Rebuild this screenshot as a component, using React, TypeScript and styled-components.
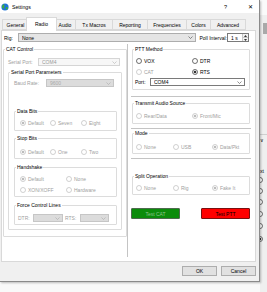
import React from 'react';
import styled, { createGlobalStyle } from 'styled-components';

const GlobalStyle = createGlobalStyle`
  html, body {
    margin: 0;
    padding: 0;
  }
  body {
    background: #f9f9f9;
    font-family: 'Liberation Sans', Arial, sans-serif;
    font-size: 5px;
    line-height: 6px;
    color: #000;
  }
  * {
    box-sizing: border-box;
  }
`;

const Screen = styled.div`
  display: flex;
  align-items: flex-start;
  width: 267px;
  height: 292px;
  overflow: hidden;
`;

const Dialog = styled.div`
  flex: 0 0 260px;
  height: 282px;
  display: flex;
  flex-direction: column;
  background: #f0f0f0;
  border-right: 1px solid #8a8a8a;
  border-bottom: 1px solid #8a8a8a;
  box-shadow: 1px 1px 2px rgba(0, 0, 0, 0.25);
  position: relative;
  z-index: 1;
`;

const TitleBar = styled.div`
  height: 13px;
  flex-shrink: 0;
  display: flex;
  align-items: center;
  gap: 3px;
  padding: 0 6px 0 1px;
  background: #fff;
`;

const TitleText = styled.span`
  flex: 1;
  font-size: 5.2px;
`;

const TitleButton = styled.span<{ $gap?: number }>`
  font-size: ${(p) => (p.$gap ? 5.5 : 6)}px;
  margin-right: ${(p) => p.$gap ?? 0}px;
`;

const TabStrip = styled.div`
  height: 17px;
  flex-shrink: 0;
  display: flex;
  align-items: flex-end;
  padding-left: 2px;
`;

const Tab = styled.div<{ $w: number; $active?: boolean }>`
  width: ${(p) => p.$w + (p.$active ? 4 : 0)}px;
  height: ${(p) => (p.$active ? 14 : 11)}px;
  margin: 0 ${(p) => (p.$active ? -3 : -1)}px ${(p) => (p.$active ? -1 : 0)}px
    ${(p) => (p.$active ? -2 : 0)}px;
  display: flex;
  align-items: center;
  justify-content: center;
  padding-bottom: ${(p) => (p.$active ? 2 : 0)}px;
  background: ${(p) => (p.$active ? '#fff' : '#f0f0f0')};
  border: 1px solid #d9d9d9;
  border-bottom: ${(p) => (p.$active ? 'none' : '1px solid #d9d9d9')};
  position: relative;
  z-index: ${(p) => (p.$active ? 2 : 0)};
`;

const Panel = styled.div`
  margin: 0 3px 0 1px;
  height: 232px;
  flex-shrink: 0;
  display: flex;
  flex-direction: column;
  padding: 2px 3px 0 1px;
  background: #fff;
  border: 1px solid #d9d9d9;
`;

const RigRow = styled.div`
  height: 9px;
  display: flex;
  align-items: center;
  padding-right: 3px;
`;

const Label = styled.span<{ $w?: number; $disabled?: boolean; $ml?: number }>`
  flex: 0 0 ${(p) => (p.$w ? `${p.$w}px` : 'auto')};
  margin-left: ${(p) => p.$ml ?? 0}px;
  color: ${(p) => (p.$disabled ? '#a0a0a0' : '#000')};
  white-space: nowrap;
`;

type ComboKind = 'button' | 'edit' | 'disabled' | 'disabledGray';

const comboColors: Record<ComboKind, { bg: string; border: string; text: string; arrow: string }> = {
  button: { bg: '#e5e5e5', border: '#adadad', text: '#000', arrow: '#444' },
  edit: { bg: '#fff', border: '#7a7a7a', text: '#000', arrow: '#444' },
  disabled: { bg: '#f7f7f7', border: '#d5d5d5', text: '#9a9a9a', arrow: '#b0b0b0' },
  disabledGray: { bg: '#dcdcdc', border: '#c6c6c6', text: '#a9a9a9', arrow: '#a9a9a9' },
};

const ComboBox = styled.div<{ $kind: ComboKind; $w?: number; $h?: number }>`
  flex: ${(p) => (p.$w ? `0 0 ${p.$w}px` : '1')};
  height: ${(p) => p.$h ?? 8}px;
  display: flex;
  align-items: center;
  padding: 0 2px 0 3px;
  background: ${(p) => comboColors[p.$kind].bg};
  border: 1px solid ${(p) => comboColors[p.$kind].border};
  color: ${(p) => comboColors[p.$kind].text};
`;

const ComboText = styled.span`
  flex: 1;
  white-space: nowrap;
  overflow: hidden;
`;

function Combo({ kind, text, w, h }: { kind: ComboKind; text?: string; w?: number; h?: number }) {
  return (
    <ComboBox $kind={kind} $w={w} $h={h}>
      <ComboText>{text}</ComboText>
      <svg width="5" height="3" viewBox="0 0 5 3">
        <polyline points="0.5,0.5 2.5,2.5 4.5,0.5" fill="none" stroke={comboColors[kind].arrow} strokeWidth="0.6" />
      </svg>
    </ComboBox>
  );
}

const SpinBox = styled.div`
  flex: 0 0 22px;
  height: 9px;
  display: flex;
  align-items: stretch;
  background: #fff;
  border: 1px solid #7a7a7a;
`;

const SpinValue = styled.span`
  flex: 1;
  display: flex;
  align-items: center;
  padding-left: 3px;
`;

const SpinArrows = styled.div`
  flex: 0 0 6px;
  display: flex;
  flex-direction: column;
  border-left: 1px solid #c8c8c8;
  background: #f2f2f2;
`;

const SpinArrow = styled.div<{ $up?: boolean }>`
  flex: 1;
  display: flex;
  align-items: center;
  justify-content: center;
  border-bottom: ${(p) => (p.$up ? '1px solid #c8c8c8' : 'none')};
`;

const Columns = styled.div`
  height: 213px;
  margin-top: 2px;
  display: flex;
`;

const LeftCol = styled.div`
  flex: 0 0 124px;
  padding-top: 2px;
  display: flex;
  flex-direction: column;
`;

const VLine = styled.div`
  flex: 0 0 1px;
  background: #c4c4c4;
`;

const RightCol = styled.div`
  flex: 0 0 120px;
  margin-left: 3px;
  padding-top: 2px;
  display: flex;
  flex-direction: column;
`;

const Fieldset = styled.fieldset<{ $pad: string; $mt?: number; $mx?: number }>`
  margin: ${(p) => p.$mt ?? 0}px ${(p) => p.$mx ?? 0}px 0;
  min-width: 0;
  padding: ${(p) => p.$pad};
  display: flex;
  flex-direction: column;
  border: 1px solid #dcdcdc;
  border-radius: 1px;
`;

const Legend = styled.legend<{ $ml: number }>`
  height: 6px;
  padding: 0 1px;
  margin-left: ${(p) => p.$ml}px;
  line-height: 6px;
  white-space: nowrap;
`;

function GroupBox({
  title,
  pt = 0,
  pr = 4,
  pb = 2,
  pl = 4,
  mt,
  mx,
  children,
}: {
  title: string;
  pt?: number;
  pr?: number;
  pb?: number;
  pl?: number;
  mt?: number;
  mx?: number;
  children: React.ReactNode;
}) {
  return (
    <Fieldset $pad={`${pt}px ${pr}px ${pb}px ${pl}px`} $mt={mt} $mx={mx}>
      <Legend $ml={1 - pl}>{title}</Legend>
      {children}
    </Fieldset>
  );
}

const FormRow = styled.div<{ $mt: number; $ml?: number; $mr?: number }>`
  height: 8px;
  margin: ${(p) => p.$mt}px ${(p) => p.$mr ?? 0}px 0 ${(p) => p.$ml ?? 0}px;
  display: flex;
  align-items: center;
`;

const RadioGrid = styled.div<{ $cols: string; $mt: number }>`
  height: 8px;
  margin-top: ${(p) => p.$mt}px;
  display: grid;
  grid-template-columns: ${(p) => p.$cols};
  align-items: center;
`;

const RadioLabel = styled.span<{ $disabled?: boolean }>`
  display: inline-flex;
  align-items: center;
  gap: 2px;
  white-space: nowrap;
  color: ${(p) => (p.$disabled ? '#a0a0a0' : '#000')};
`;

function Radio({ label, checked, disabled }: { label: string; checked?: boolean; disabled?: boolean }) {
  const c = disabled ? '#bcbcbc' : '#333';
  return (
    <RadioLabel $disabled={disabled}>
      <svg width="6" height="6" viewBox="0 0 6 6">
        <circle cx="3" cy="3" r="2.5" fill="#fff" stroke={c} strokeWidth="0.7" />
        {checked && <circle cx="3" cy="3" r="1.3" fill={c} />}
      </svg>
      {label}
    </RadioLabel>
  );
}

const HLine = styled.div<{ $mt: number }>`
  height: 1px;
  flex-shrink: 0;
  margin-top: ${(p) => p.$mt}px;
  background: #c4c4c4;
`;

const TestRow = styled.div`
  margin-top: 13px;
  display: flex;
  justify-content: space-between;
  padding-right: 1px;
`;

const TestButton = styled.div<{ $bg: string; $border: string; $color: string }>`
  width: 49px;
  height: 11px;
  display: flex;
  align-items: center;
  justify-content: center;
  background: ${(p) => p.$bg};
  border: 1px solid ${(p) => p.$border};
  border-radius: 1px;
  color: ${(p) => p.$color};
`;

const Footer = styled.div`
  margin-top: 4px;
  display: flex;
  justify-content: flex-end;
  gap: 4px;
  padding-right: 3px;
`;

const PushButton = styled.div`
  width: 35px;
  height: 10px;
  display: flex;
  align-items: center;
  justify-content: center;
  background: #e1e1e1;
  border: 1px solid #adadad;
`;

const BackWindow = styled.div`
  flex: 1;
  height: 292px;
  display: flex;
  flex-direction: column;
  background: #efefef;
  overflow: hidden;
`;

const BackTop = styled.div`
  height: 15px;
  background: #fafafa;
  flex-shrink: 0;
`;

const BackThumb = styled.div`
  height: 11px;
  width: 4px;
  margin: 8px 0 0 3px;
  background: #a9a9a9;
  flex-shrink: 0;
`;

const BackRule = styled.div<{ $mt: number }>`
  height: 1px;
  margin-top: ${(p) => p.$mt}px;
  background: #cfcfcf;
  flex-shrink: 0;
`;

const BackText = styled.span<{ $mt: number }>`
  margin: ${(p) => p.$mt}px 0 0 0;
  height: 6px;
  flex-shrink: 0;
  white-space: nowrap;
`;

const BackRadio = styled.div<{ $mt: number }>`
  height: 6px;
  margin: ${(p) => p.$mt}px 0 0 -3px;
  flex-shrink: 0;
  display: flex;
`;

function GlobeIcon() {
  return (
    <svg width="8" height="8" viewBox="0 0 8 8">
      <circle cx="4" cy="4" r="3.6" fill="#1f74d6" />
      <path d="M2 1.6 C3 1.2 4 2 3.4 3 C2.8 3.8 3.6 4.6 2.8 5.6 C2 5.4 1 4.4 1 3.4 Z" fill="#3fae3a" />
      <path d="M5 4 C6 3.6 7.2 4.2 6.8 5.4 C6.2 6.6 5.2 6.8 4.8 6 Z" fill="#3fae3a" />
    </svg>
  );
}

const tabs: { label: string; w: number; active?: boolean }[] = [
  { label: 'General', w: 27 },
  { label: 'Radio', w: 27, active: true },
  { label: 'Audio', w: 22 },
  { label: 'Tx Macros', w: 38 },
  { label: 'Reporting', w: 36 },
  { label: 'Frequencies', w: 40 },
  { label: 'Colors', w: 25 },
  { label: 'Advanced', w: 36 },
];

export default function App() {
  return (
    <>
      <GlobalStyle />
      <Screen>
        <Dialog>
          <TitleBar>
            <GlobeIcon />
            <TitleText>Settings</TitleText>
            <TitleButton $gap={18}>?</TitleButton>
            <TitleButton>✕</TitleButton>
          </TitleBar>

          <TabStrip>
            {tabs.map((t) => (
              <Tab key={t.label} $w={t.w} $active={t.active}>
                {t.label}
              </Tab>
            ))}
          </TabStrip>

          <Panel>
            <RigRow>
              <Label $w={14} $ml={1}>Rig:</Label>
              <Combo kind="button" text="None" h={9} />
              <Label $ml={3}>Poll Interval:</Label>
              <SpinBox>
                <SpinValue>1 s</SpinValue>
                <SpinArrows>
                  <SpinArrow $up>
                    <svg width="3" height="2" viewBox="0 0 3 2">
                      <polygon points="0,2 1.5,0 3,2" fill="#333" />
                    </svg>
                  </SpinArrow>
                  <SpinArrow>
                    <svg width="3" height="2" viewBox="0 0 3 2">
                      <polygon points="0,0 1.5,2 3,0" fill="#333" />
                    </svg>
                  </SpinArrow>
                </SpinArrows>
              </SpinBox>
            </RigRow>

            <Columns>
              <LeftCol>
                <GroupBox title="CAT Control" pl={4} pr={4} pb={6} mx={0}>
                  <FormRow $mt={6} $mr={2}>
                    <Label $w={30} $disabled>Serial Port:</Label>
                    <Combo kind="disabled" text="COM4" />
                  </FormRow>
                  <GroupBox title="Serial Port Parameters" pl={5} pr={4} pb={4} mt={3}>
                    <FormRow $mt={4}>
                      <Label $w={32} $disabled>Baud Rate:</Label>
                      <Combo kind="disabledGray" text="9600" w={68} />
                    </FormRow>

                    <GroupBox title="Data Bits" pl={5} pb={3} mt={21}>
                      <RadioGrid $cols="30px 31px auto" $mt={5}>
                        <Radio label="Default" checked disabled />
                        <Radio label="Seven" disabled />
                        <Radio label="Eight" disabled />
                      </RadioGrid>
                    </GroupBox>

                    <GroupBox title="Stop Bits" pl={5} pb={2} mt={4}>
                      <RadioGrid $cols="30px 31px auto" $mt={7}>
                        <Radio label="Default" checked disabled />
                        <Radio label="One" disabled />
                        <Radio label="Two" disabled />
                      </RadioGrid>
                    </GroupBox>

                    <GroupBox title="Handshake" pl={5} pb={2} mt={5}>
                      <RadioGrid $cols="46px auto" $mt={5}>
                        <Radio label="Default" checked disabled />
                        <Radio label="None" disabled />
                      </RadioGrid>
                      <RadioGrid $cols="46px auto" $mt={3}>
                        <Radio label="XON/XOFF" disabled />
                        <Radio label="Hardware" disabled />
                      </RadioGrid>
                    </GroupBox>

                    <GroupBox title="Force Control Lines" pl={3} pb={2} mt={5}>
                      <FormRow $mt={6}>
                        <Label $w={15} $disabled>DTR:</Label>
                        <Combo kind="disabledGray" w={30} />
                        <Label $w={15} $ml={2} $disabled>RTS:</Label>
                        <Combo kind="disabledGray" w={29} />
                      </FormRow>
                    </GroupBox>
                  </GroupBox>
                </GroupBox>
              </LeftCol>

              <VLine />

              <RightCol>
                <GroupBox title="PTT Method" pl={3} pr={4} pb={3} mx={1}>
                  <RadioGrid $cols="56px auto" $mt={5}>
                    <Radio label="VOX" />
                    <Radio label="DTR" />
                  </RadioGrid>
                  <RadioGrid $cols="56px auto" $mt={3}>
                    <Radio label="CAT" disabled />
                    <Radio label="RTS" checked />
                  </RadioGrid>
                  <FormRow $mt={2} $ml={-1}>
                    <Label $w={15}>Port:</Label>
                    <Combo kind="edit" text="COM4" w={95} />
                  </FormRow>
                </GroupBox>

                <HLine $mt={6} />

                <GroupBox title="Transmit Audio Source" pl={3} pb={3} mt={3} mx={1}>
                  <RadioGrid $cols="56px auto" $mt={6}>
                    <Radio label="Rear/Data" disabled />
                    <Radio label="Front/Mic" checked disabled />
                  </RadioGrid>
                </GroupBox>

                <HLine $mt={4} />

                <GroupBox title="Mode" pl={3} pb={2} mt={1} mx={1}>
                  <RadioGrid $cols="37px 39px auto" $mt={7}>
                    <Radio label="None" disabled />
                    <Radio label="USB" disabled />
                    <Radio label="Data/Pkt" checked disabled />
                  </RadioGrid>
                </GroupBox>

                <HLine $mt={4} />

                <GroupBox title="Split Operation" pl={3} pb={2} mt={14} mx={1}>
                  <RadioGrid $cols="37px 39px auto" $mt={5}>
                    <Radio label="None" disabled />
                    <Radio label="Rig" disabled />
                    <Radio label="Fake It" checked disabled />
                  </RadioGrid>
                </GroupBox>

                <TestRow>
                  <TestButton $bg="#0b8c0b" $border="#4d6b4d" $color="#8cc48c">
                    Test CAT
                  </TestButton>
                  <TestButton $bg="#ff0000" $border="#7a1010" $color="#000">
                    Test PTT
                  </TestButton>
                </TestRow>
              </RightCol>
            </Columns>
          </Panel>

          <Footer>
            <PushButton>OK</PushButton>
            <PushButton>Cancel</PushButton>
          </Footer>
        </Dialog>

        <BackWindow>
          <BackTop />
          <BackThumb />
          <BackRule $mt={100} />
          <BackText $mt={2}>∨</BackText>
          <BackText $mt={25}>xt</BackText>
          {[3, 5, 5, 6, 6, 7].map((mt, i) => (
            <BackRadio key={i} $mt={mt}>
              <svg width="6" height="6" viewBox="0 0 6 6">
                <circle cx="3" cy="3" r="2.5" fill="#fff" stroke="#333" strokeWidth="0.7" />
                {i === 5 && <circle cx="3" cy="3" r="1.3" fill="#333" />}
              </svg>
            </BackRadio>
          ))}
        </BackWindow>
      </Screen>
    </>
  );
}
